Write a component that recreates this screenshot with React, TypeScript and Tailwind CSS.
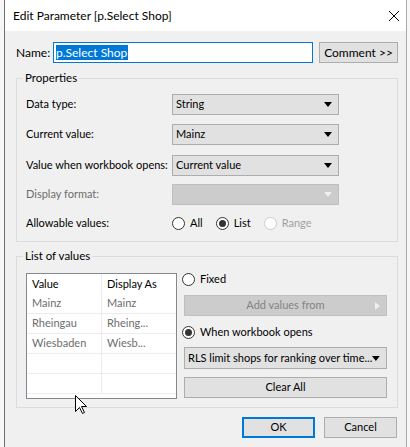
import React from "react";

const font = { fontFamily: 'Lato, "Liberation Sans", Arial, sans-serif' };

function Arrow({ color = "#000" }: { color?: string }) {
  return (
    <svg width="8" height="5" viewBox="0 0 8 5">
      <path d="M0 0 H8 L4 5 Z" fill={color} />
    </svg>
  );
}

function Select({ value, disabled }: { value?: string; disabled?: boolean }) {
  return (
    <div
      className={`flex items-center justify-between w-[167px] h-[21px] pl-[3px] pr-[6px] border ${
        disabled ? "bg-[#cccccc] border-[#bfbfbf]" : "bg-[#e1e1e1] border-[#adadad]"
      }`}
    >
      <span className="text-black">{value}</span>
      <Arrow color={disabled ? "#f0f0f0" : "#000"} />
    </div>
  );
}

function Radio({ checked, disabled, label }: { checked?: boolean; disabled?: boolean; label: string }) {
  return (
    <div className="flex items-center gap-[5px]">
      <div
        className={`w-[13px] h-[13px] rounded-full border bg-white flex items-center justify-center ${
          disabled ? "border-[#cccccc]" : "border-[#333333]"
        }`}
      >
        {checked && <div className="w-[7px] h-[7px] rounded-full bg-[#333333]" />}
      </div>
      <span className={disabled ? "text-[#a0a0a0]" : "text-black"}>{label}</span>
    </div>
  );
}

function Group({ title, children, className }: { title: string; children: React.ReactNode; className?: string }) {
  return (
    <div className={`relative border border-[#dcdcdc] ${className ?? ""}`}>
      <span className="absolute left-[6px] -top-[9px] px-[2px] bg-[#f0f0f0] leading-[16px] text-[11.5px]">{title}</span>
      {children}
    </div>
  );
}

const rows = [
  ["Mainz", "Mainz"],
  ["Rheingau", "Rheing..."],
  ["Wiesbaden", "Wiesb..."],
  ["", ""],
  ["", ""],
];

export default function App() {
  return (
    <div className="relative w-[410px] h-[447px] bg-[#f7f7f7] overflow-hidden text-[11px] whitespace-nowrap" style={font}>
      <div className="ml-[4px] w-[403px] h-full border-l border-r border-l-[#6f6f6f] border-r-[#a9a9a9] flex flex-col">
        {/* title bar */}
        <div className="h-[31px] bg-white flex items-center justify-between pl-[8px] pr-[6px] shrink-0">
          <span className="text-black text-[12px]">Edit Parameter [p.Select Shop]</span>
          <svg width="12" height="12" viewBox="0 0 12 12">
            <path d="M1 1 L11 11 M11 1 L1 11" stroke="#000" strokeWidth="1" />
          </svg>
        </div>

        <div className="flex-1 bg-[#f0f0f0] pl-[11px] pr-[8px]">
          {/* name row */}
          <div className="flex items-center mt-[11px] h-[21px] text-[12px]">
            <span className="w-[37px]">Name:</span>
            <div className="w-[260px] h-[21px] border border-[#0078d7] bg-white flex items-center pl-[2px]">
              <span className="bg-[#0078d7] text-white leading-[15px] pr-[1px]">p.Select Shop</span>
            </div>
            <button className="ml-[6px] w-[79px] h-[21px] bg-[#e1e1e1] border border-[#adadad] text-black">
              Comment &gt;&gt;
            </button>
          </div>

          {/* properties */}
          <Group title="Properties" className="mt-[15px] h-[164px] pt-[15px] pl-[9px]">
            <div className="flex items-center h-[21px]">
              <span className="w-[146px]">Data type:</span>
              <Select value="String" />
            </div>
            <div className="flex items-center h-[21px] mt-[9px]">
              <span className="w-[146px]">Current value:</span>
              <Select value="Mainz" />
            </div>
            <div className="flex items-center h-[21px] mt-[10px]">
              <span className="w-[146px]">Value when workbook opens:</span>
              <Select value="Current value" />
            </div>
            <div className="flex items-center h-[21px] mt-[8px]">
              <span className="w-[146px] text-[#6d6d6d]">Display format:</span>
              <Select disabled />
            </div>
            <div className="flex items-center h-[21px] mt-[8px]">
              <span className="w-[146px]">Allowable values:</span>
              <div className="flex items-center gap-[13px]">
                <Radio label="All" />
                <Radio label="List" checked />
                <Radio label="Range" disabled />
              </div>
            </div>
          </Group>

          {/* list of values */}
          <Group title="List of values" className="mt-[14px] h-[152px] pt-[16px] pl-[9px] flex gap-[7px]">
            <div className="w-[151px] h-[126px] border border-[#828790] bg-white flex flex-col overflow-hidden">
              <div className="flex h-[20px] shrink-0">
                <div className="w-[75px] pl-[5px] flex items-center border-r border-[#ececec]">Value</div>
                <div className="flex-1 pl-[5px] flex items-center">Display As</div>
              </div>
              {rows.map((r, i) => (
                <div key={i} className="flex h-[20px] shrink-0 border-b border-[#ececec] text-[#6d6d6d]">
                  <div className="w-[75px] pl-[5px] flex items-center border-r border-[#ececec]">{r[0]}</div>
                  <div className="flex-1 pl-[5px] flex items-center">{r[1]}</div>
                </div>
              ))}
            </div>
            <div className="flex flex-col w-[203px]">
              <div className="h-[15px] -mt-[1px] flex items-center -ml-[2px]">
                <Radio label="Fixed" />
              </div>
              <div className="mt-[8px] h-[21px] bg-[#cccccc] border border-[#bfbfbf] relative flex items-center justify-center text-[#838383]">
                Add values from
                <svg className="absolute right-[6px]" width="5" height="8" viewBox="0 0 5 8">
                  <path d="M0 0 L5 4 L0 8 Z" fill="#f0f0f0" />
                </svg>
              </div>
              <div className="mt-[9px] h-[15px] flex items-center -ml-[2px]">
                <Radio label="When workbook opens" checked />
              </div>
              <div className="mt-[7px] h-[22px] bg-[#e1e1e1] border border-[#adadad] flex items-center justify-between pl-[3px] pr-[6px]">
                <span>RLS limit shops for ranking over time...</span>
                <Arrow />
              </div>
              <div className="mt-[8px] h-[21px] bg-[#e1e1e1] border border-[#adadad] flex items-center justify-center">
                Clear All
              </div>
            </div>
          </Group>

          {/* buttons */}
          <div className="flex justify-end gap-[9px] mt-[9px] pr-[1px]">
            <button className="w-[73px] h-[21px] bg-[#e1e1e1] border-2 border-[#0078d7] text-black">OK</button>
            <button className="w-[73px] h-[21px] bg-[#e1e1e1] border border-[#adadad] text-black">Cancel</button>
          </div>
        </div>
      </div>

      {/* mouse pointer */}
      <svg className="absolute left-[75px] top-[395px]" width="13" height="20" viewBox="0 0 13 20">
        <path d="M0.5 0.5 L0.5 16.5 L4.5 12.5 L7.5 18.5 L9.5 17.5 L6.5 11.5 L11.5 11.5 Z" fill="#fff" stroke="#000" strokeWidth="1" />
      </svg>
    </div>
  );
}
